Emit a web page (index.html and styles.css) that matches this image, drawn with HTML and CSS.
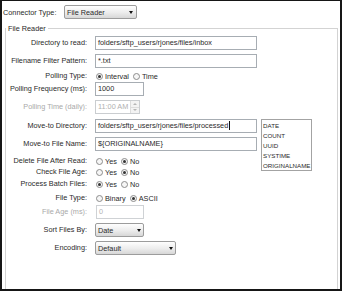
FILE: index.html
```html
<!DOCTYPE html>
<html>
<head>
<meta charset="utf-8">
<link rel="stylesheet" href="styles.css">
</head>
<body>
<div class="frame">
  <div class="top">
    <span class="top-label">Connector Type:</span>
    <div class="select w-conn"><span>File Reader</span><span class="arrow"></span></div>
  </div>
  <fieldset class="group">
    <legend>File Reader</legend>
    <div class="form">
      <div class="lbl">Directory to read:</div>
      <div class="ctl input w-full">folders/sftp_users/rjones/files/inbox</div>

      <div class="lbl">Filename Filter Pattern:</div>
      <div class="ctl input w-full">*.txt</div>

      <div class="lbl r">Polling Type:</div>
      <div class="ctl radios"><span class="radio on"></span><span class="opt">Interval</span><span class="radio"></span><span class="opt">Time</span></div>

      <div class="lbl">Polling Frequency (ms):</div>
      <div class="ctl input w-49">1000</div>

      <div class="lbl dis">Polling Time (daily):</div>
      <div class="ctl spin"><span class="spin-text">11:00 AM</span><span class="spin-btns"><span class="up"></span><span class="down"></span></span></div>

      <div class="lbl">Move-to Directory:</div>
      <div class="ctl input w-full">folders/sftp_users/rjones/files/processed<span class="caret"></span></div>

      <div class="list">
        <div>DATE</div>
        <div>COUNT</div>
        <div>UUID</div>
        <div>SYSTIME</div>
        <div>ORIGINALNAME</div>
      </div>

      <div class="lbl">Move-to File Name:</div>
      <div class="ctl input w-full">${ORIGINALNAME}</div>

      <div class="lbl r">Delete File After Read:</div>
      <div class="ctl radios"><span class="radio"></span><span class="opt">Yes</span><span class="radio on"></span><span class="opt">No</span></div>

      <div class="lbl r">Check File Age:</div>
      <div class="ctl radios"><span class="radio"></span><span class="opt">Yes</span><span class="radio on"></span><span class="opt">No</span></div>

      <div class="lbl r">Process Batch Files:</div>
      <div class="ctl radios"><span class="radio on"></span><span class="opt">Yes</span><span class="radio"></span><span class="opt">No</span></div>

      <div class="lbl r">File Type:</div>
      <div class="ctl radios"><span class="radio"></span><span class="opt">Binary</span><span class="radio on"></span><span class="opt">ASCII</span></div>

      <div class="lbl dis">File Age (ms):</div>
      <div class="ctl input w-48 dis">0</div>

      <div class="lbl">Sort Files By:</div>
      <div class="ctl select w-sort"><span>Date</span><span class="arrow"></span></div>

      <div class="lbl">Encoding:</div>
      <div class="ctl select w-enc"><span>Default</span><span class="arrow"></span></div>
    </div>
  </fieldset>
</div>
</body>
</html>
```
FILE: styles.css
```css
* { box-sizing: border-box; }
html, body { margin: 0; padding: 0; background: #fff; }
body {
  font-family: "Liberation Sans", Arial, sans-serif;
  font-size: 7.3px;
  color: #2a2a2a;
}
.frame {
  width: 342px;
  height: 291px;
  border-style: solid;
  border-color: #161616;
  border-width: 1px 2px 2px 2px;
  background: #fff;
  overflow: hidden;
  display: flex;
  flex-direction: column;
}
.top {
  display: flex;
  align-items: center;
  height: 14px;
  margin-top: 4px;
  padding-left: 1px;
}
.top-label { width: 61px; white-space: nowrap; }

.select {
  height: 14px;
  border: 1px solid #9c9c9c;
  border-radius: 2px;
  background: linear-gradient(#fefefe, #ececec 55%, #d7d7d7);
  display: flex;
  align-items: center;
  justify-content: space-between;
  padding: 0 3px 0 2px;
  white-space: nowrap;
}
.arrow {
  width: 0;
  height: 0;
  border-left: 2.5px solid transparent;
  border-right: 2.5px solid transparent;
  border-top: 3px solid #111;
}
.w-conn { width: 73px; }
.w-sort { width: 49px; padding-right: 2px; }
.w-enc { width: 81px; padding-right: 2px; }

.group {
  flex: 1;
  margin: 5px 2px 0 3px;
  padding: 0;
  border: 1px solid #d3d3d3;
  border-bottom: none;
  min-width: 0;
}
.group legend {
  padding: 0 2px;
  margin-left: 0;
  line-height: 9px;
}
.form {
  display: grid;
  grid-template-columns: 85px 162px 51px;
  column-gap: 4px;
  grid-template-rows: 18px 17px 11px 18px 19px 18px 19px 11px 12px 14px 12px 18px 18px 14px;
  align-items: start;
  padding-top: 3px;
}
.lbl {
  grid-column: 1;
  text-align: right;
  padding-right: 4px;
  height: 14px;
  line-height: 14px;
  white-space: nowrap;
}
.ctl { grid-column: 2; }
.lbl.r { height: 10px; line-height: 10px; }
.dis { color: #a9a9a9; }

.input {
  height: 14px;
  border: 1px solid #a7adb3;
  background: #fff;
  padding-left: 2px;
  line-height: 12px;
  white-space: nowrap;
  overflow: hidden;
}
.input.dis { border-color: #cfd2d5; color: #b5b5b5; }
.w-full { width: 162px; }
.w-49 { width: 49px; }
.w-48 { width: 48px; margin-left: 1px; }
.caret {
  display: inline-block;
  width: 1px;
  height: 9px;
  background: #111;
  vertical-align: -2px;
  margin-left: 1px;
}

.radios {
  display: flex;
  align-items: center;
  height: 10px;
  padding-left: 1px;
  white-space: nowrap;
}
.radio {
  width: 7px;
  height: 7px;
  border-radius: 50%;
  border: 1px solid #8d8d8d;
  background: #f6f6f6;
  margin-right: 2px;
  display: flex;
  align-items: center;
  justify-content: center;
}
.radio.on::before {
  content: "";
  width: 3px;
  height: 3px;
  border-radius: 50%;
  background: #333;
}
.opt { margin-right: 4px; }

.spin {
  width: 45px;
  height: 14px;
  border: 1px solid #cacdd0;
  display: flex;
  color: #b0b0b0;
}
.spin-text { flex: 1; padding-left: 2px; line-height: 12px; white-space: nowrap; }
.spin-btns {
  width: 9px;
  display: flex;
  flex-direction: column;
  border-left: 1px solid #dcdcdc;
}
.spin-btns span {
  flex: 1;
  display: flex;
  align-items: center;
  justify-content: center;
  background: #f3f3f3;
}
.spin-btns .up { border-bottom: 1px solid #dcdcdc; }
.spin-btns .up::before {
  content: "";
  border-left: 2px solid transparent;
  border-right: 2px solid transparent;
  border-bottom: 2px solid #b5b5b5;
}
.spin-btns .down::before {
  content: "";
  border-left: 2px solid transparent;
  border-right: 2px solid transparent;
  border-top: 2px solid #b5b5b5;
}

.list {
  grid-column: 3;
  grid-row: 6 / span 4;
  height: 52px;
  border: 1px solid #a3a3a3;
  padding: 1px 0 0 1px;
  line-height: 10px;
  font-size: 6.2px;
  white-space: nowrap;
  overflow: hidden;
}
```
